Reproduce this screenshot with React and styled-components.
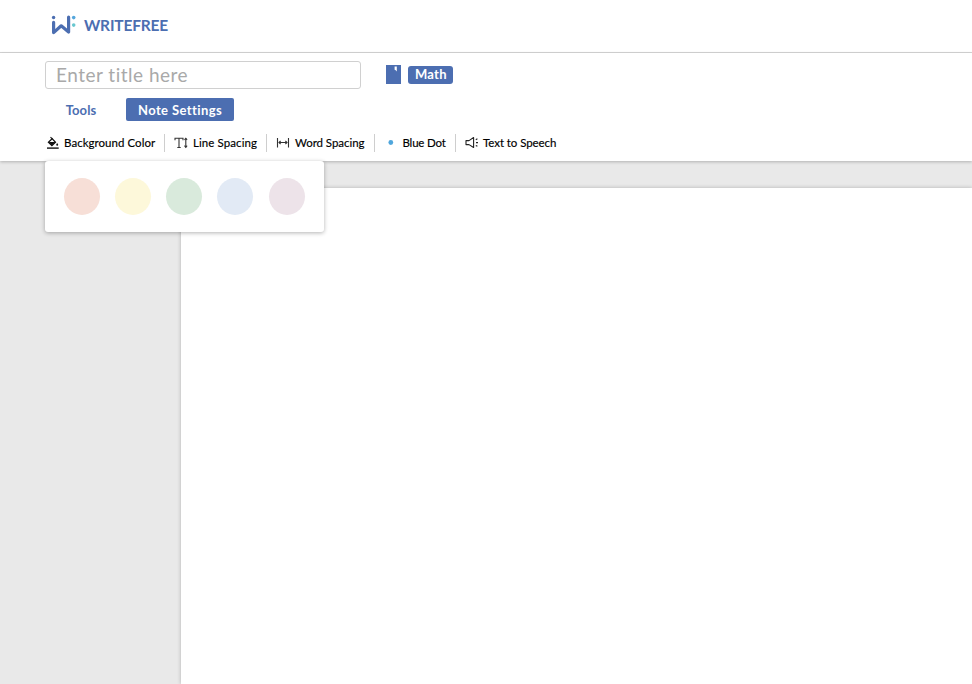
import React from "react";
import styled, { createGlobalStyle } from "styled-components";

const blue = "#4c6eb1";

const GlobalStyle = createGlobalStyle`
  * { box-sizing: border-box; }
  body {
    margin: 0;
    overflow: hidden;
    background: #e9e9e9;
    font-family: Lato, "Open Sans", sans-serif;
  }
  button, input { font-family: inherit; }
`;

const Page = styled.div`
  display: flex;
  flex-direction: column;
  width: 972px;
  height: 684px;
  overflow: hidden;
  background: #e9e9e9;
`;

const Header = styled.header`
  display: flex;
  align-items: center;
  flex: none;
  height: 53px;
  padding: 0 0 2px 51px;
  background: #fff;
  border-bottom: 1px solid #d6d6d6;
`;

const Logo = styled.svg`
  width: 25px;
  height: 20px;
  margin-right: 8px;
`;

const Brand = styled.span`
  color: ${blue};
  font-size: 15.5px;
  font-weight: 700;
  line-height: 20px;
  letter-spacing: -0.17px;
`;

const Controls = styled.section`
  position: relative;
  z-index: 1;
  display: flex;
  flex-direction: column;
  flex: none;
  height: 108px;
  padding: 8px 0 0 45px;
  background: #fff;
  box-shadow: 0 1px 3px rgba(0, 0, 0, 0.24);
`;

const TitleRow = styled.div`
  display: flex;
  align-items: center;
  height: 28px;
`;

const TitleInput = styled.input`
  width: 316px;
  height: 28px;
  padding: 0 10px 2px;
  border: 1px solid #d0d0d0;
  border-radius: 3px;
  outline: none;
  background: #fff;
  color: #444;
  font-size: 19px;
  letter-spacing: 0.5px;
  &::placeholder { color: #a9a9a9; opacity: 1; }
`;

const Notebook = styled.svg`
  width: 15px;
  height: 19px;
  margin: 0 7px 1px 25.4px;
`;

const Subject = styled.span`
  width: 45px;
  height: 18px;
  border-radius: 3px;
  background: ${blue};
  color: #fff;
  font-size: 13px;
  font-weight: 700;
  line-height: 17px;
  letter-spacing: 0.3px;
  text-align: center;
`;

const Tabs = styled.nav`
  display: flex;
  gap: 9px;
  margin-top: 9px;
`;

const Tab = styled.button`
  width: ${(p) => p.$width}px;
  height: 23px;
  padding: 0;
  border: 0;
  border-radius: 2px;
  background: ${(p) => (p.$active ? blue : "transparent")};
  color: ${(p) => (p.$active ? "#fff" : blue)};
  font-size: 13px;
  font-weight: 700;
  line-height: 24px;
  letter-spacing: ${(p) => p.$tracking}px;
  text-align: center;
`;

const Tools = styled.div`
  display: flex;
  height: 18px;
  margin-top: 13px;
`;

const Tool = styled.button`
  display: flex;
  align-items: center;
  width: ${(p) => p.$width}px;
  height: 18px;
  padding: 0 0 0 ${(p) => p.$inset}px;
  border: 0;
  border-right: ${(p) => (p.$last ? "0" : "1px solid #cecece")};
  background: transparent;
  color: #000;
  font-size: 11.5px;
  font-weight: 400;
  -webkit-text-stroke: 0.15px #000;
  line-height: 18px;
  letter-spacing: ${(p) => p.$tracking}px;
  white-space: nowrap;
`;

const ToolIcon = styled.svg`
  flex: none;
  width: 14px;
  height: 14px;
  margin-right: ${(p) => p.$gap}px;
`;

const Workspace = styled.main`
  position: relative;
  flex: 1;
  padding: 27px 0 0 181px;
`;

const Paper = styled.div`
  height: 100%;
  background: #fff;
  box-shadow: 0 0 4px rgba(0, 0, 0, 0.24);
`;

const Palette = styled.div`
  position: absolute;
  z-index: 2;
  top: 108px;
  left: 45px;
  display: flex;
  gap: 15.3px;
  width: 279px;
  height: 71px;
  padding: 17px 18px 17px 18.5px;
  border-radius: 3px;
  background: #fff;
  box-shadow: 0 1px 4px rgba(0, 0, 0, 0.3);
`;

const Swatch = styled.button`
  flex: none;
  width: 36px;
  height: 37px;
  padding: 0;
  border: 0;
  border-radius: 50%;
  background: ${(p) => p.$color};
`;

const FillIcon = (
  <>
    <path d="M4.5 1.2 6.5 3.2" stroke="#111" strokeWidth="1.1" />
    <path d="M6.1 2.7 2.4 6.3 5.9 9.6 9.5 6.3Z" fill="none" stroke="#111" strokeWidth="1.2" />
    <path d="M2.6 6h6.9L5.9 9.6Z" fill="#111" />
    <path d="M11.2 6.9c.7 1 1 1.4 1 1.9a1 1 0 0 1-2 0c0-.5.4-1 1-1.9Z" fill="#111" />
    <path d="M1 12.1h11.7" stroke="#111" strokeWidth="1.4" />
  </>
);

const LineIcon = (
  <g fill="none" stroke="#333" strokeWidth="1.1">
    <path d="M1 4.2V2.3h8v1.9M5 2.3v9.2M3.3 11.5h3.4M11.8 2.5v8.8" />
    <path d="m10.5 3.9 1.3-1.6 1.3 1.6M10.5 9.7l1.3 1.6 1.3-1.6" />
  </g>
);

const WordIcon = (
  <g fill="none" stroke="#333" strokeWidth="1.1">
    <path d="M1.5 2v9.5M12.5 2v9.5M3 6.5h8" />
    <path d="M4.6 5 3 6.5 4.6 8M9.4 5 11 6.5 9.4 8" />
  </g>
);

const DotIcon = <circle cx="6.8" cy="6.5" r="2.4" fill="#4fa6dc" />;

const SpeechIcon = (
  <g fill="none" stroke="#222" strokeWidth="1.1" strokeLinejoin="round">
    <path d="M1 4.6h3L8.6 1.5v10L4 8.6H1Z" />
    <path d="m10.8 3.7 1.6-.9M11 6.6h2M10.8 9.4l1.6.9" />
  </g>
);

const tools = [
  { label: "Background Color", width: 120, inset: 1, gap: 4, tracking: 0.04, icon: FillIcon },
  { label: "Line Spacing", width: 102, inset: 9, gap: 5, tracking: 0.09, icon: LineIcon },
  { label: "Word Spacing", width: 108, inset: 9, gap: 5, tracking: -0.05, icon: WordIcon },
  { label: "Blue Dot", width: 81, inset: 9, gap: 4.5, tracking: -0.2, icon: DotIcon },
  { label: "Text to Speech", width: 110, inset: 9, gap: 4, tracking: -0.07, icon: SpeechIcon },
];

const colors = ["#f7dfd7", "#fdf8da", "#d9eadc", "#e2eaf5", "#ede3e9"];

export default function App() {
  return (
    <>
      <GlobalStyle />
      <Page>
        <Header>
          <Logo viewBox="0 0 25 20">
            <path d="M2.6 7.4v10.2L10.2 10.8 17.6 17V2.2" fill="none" stroke={blue} strokeWidth="3.2" strokeLinejoin="round" strokeLinecap="round" />
            <circle cx="2.6" cy="2.5" r="1.7" fill={blue} />
            <circle cx="22.7" cy="2.6" r="1.8" fill="#55a7dc" />
            <circle cx="22.7" cy="10.1" r="1.8" fill="#68c7cf" />
          </Logo>
          <Brand>WRITEFREE</Brand>
        </Header>
        <Controls>
          <TitleRow>
            <TitleInput placeholder="Enter title here" />
            <Notebook viewBox="0 0 15 19">
              <path d="M0 0h15v19H0Z" fill={blue} />
              <path d="M8.6 1.5h2.2v5l-1.1-1.2-1.1-.6Z" fill="#fff" />
            </Notebook>
            <Subject>Math</Subject>
          </TitleRow>
          <Tabs>
            <Tab $width={72} $tracking={0.1}>Tools</Tab>
            <Tab $width={108} $tracking={0.4} $active>Note Settings</Tab>
          </Tabs>
          <Tools>
            {tools.map((t, i) => (
              <Tool key={t.label} $width={t.width} $inset={t.inset} $tracking={t.tracking} $last={i === tools.length - 1}>
                <ToolIcon viewBox="0 0 14 14" $gap={t.gap}>{t.icon}</ToolIcon>
                {t.label}
              </Tool>
            ))}
          </Tools>
          <Palette>
            {colors.map((c) => <Swatch key={c} $color={c} aria-label={c} />)}
          </Palette>
        </Controls>
        <Workspace>
          <Paper />
        </Workspace>
      </Page>
    </>
  );
}
